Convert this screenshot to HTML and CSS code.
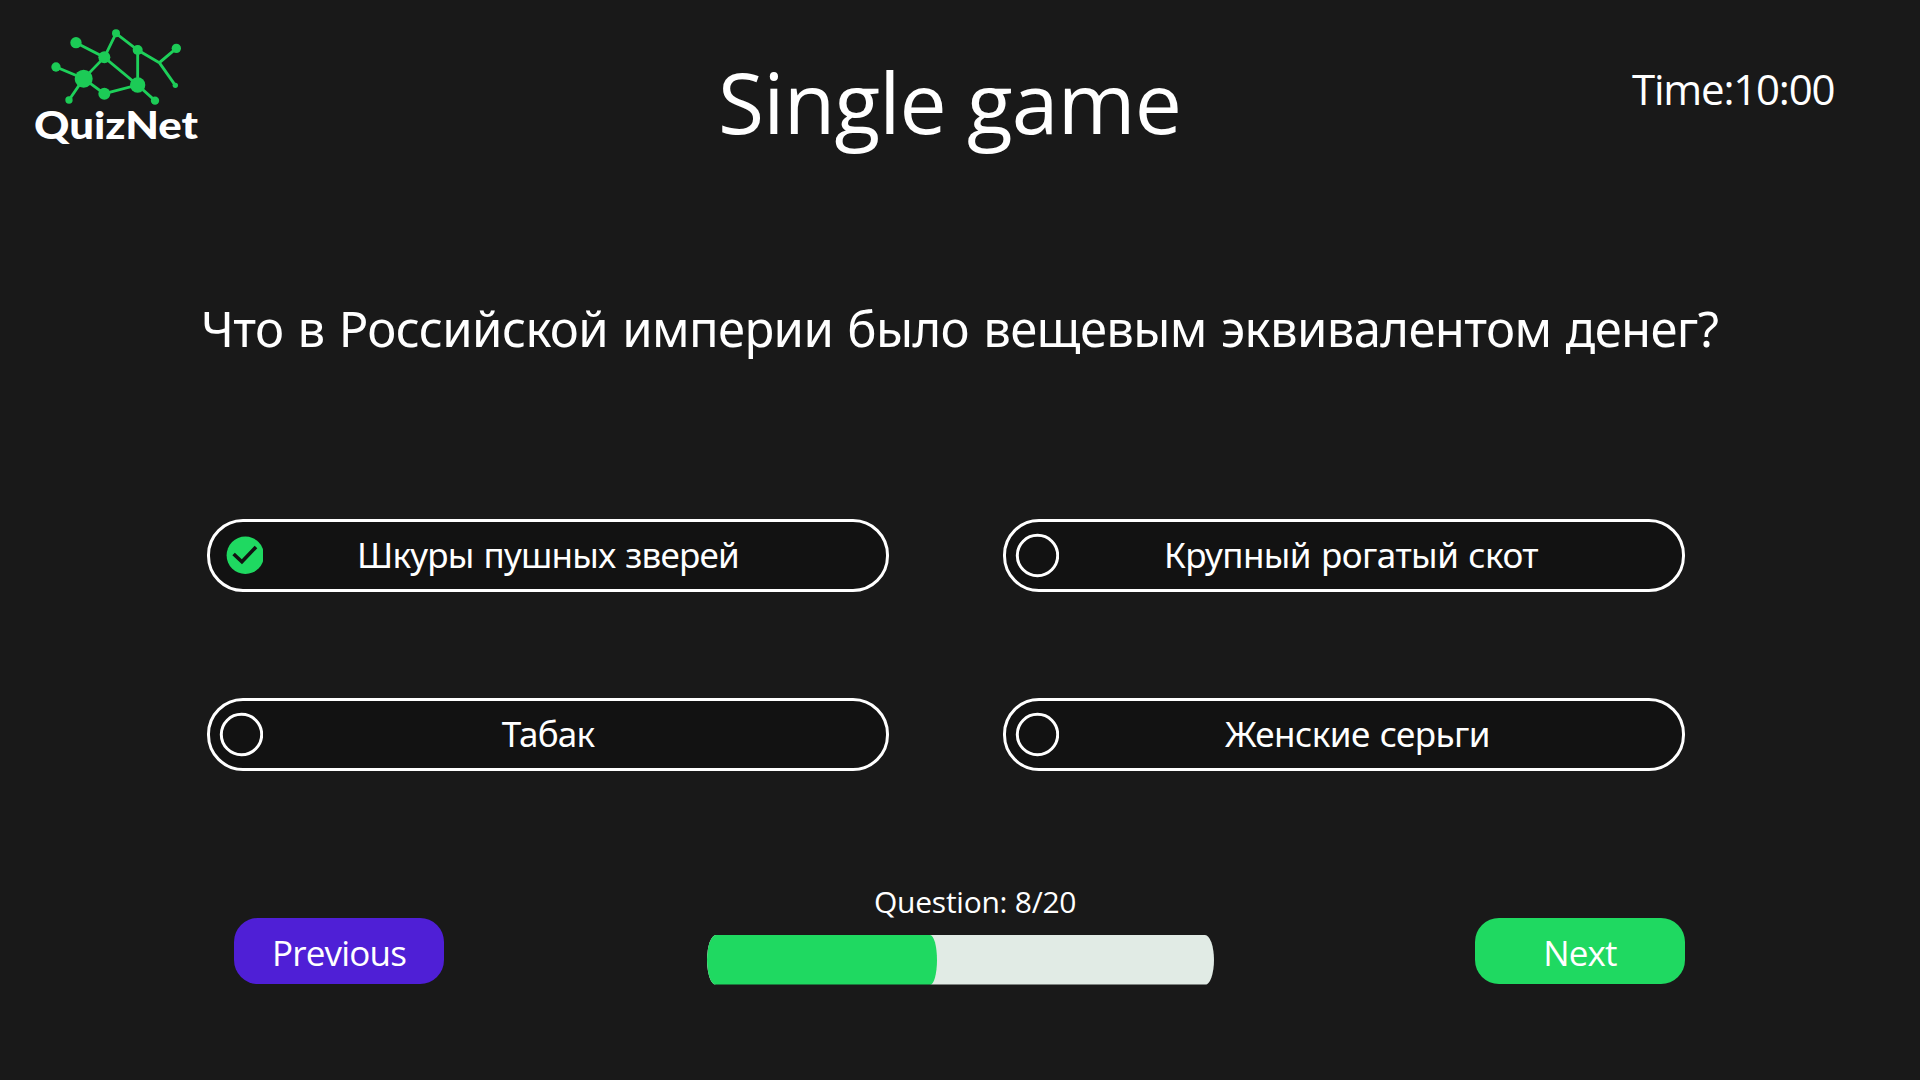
FILE: index.html
```html
<!DOCTYPE html>
<html lang="ru">
<head>
<meta charset="utf-8">
<title>QuizNet — Single game</title>
<link rel="stylesheet" href="styles.css">
</head>
<body>
<div class="page">
  <header class="header">
    <svg class="logo" viewBox="0 0 600 450" role="img" aria-label="QuizNet">
      <g class="logo-links">
        <path d="M168 98 253 142 288 70 353 120 418 158 469 115M418 158 466 226M353 120V225L253 142 191 206 108 171M191 206 147 270M191 206 253 251 353 225 405 272"/>
      </g>
      <g class="logo-nodes">
        <circle cx="168" cy="98" r="17"/>
        <circle cx="288" cy="70" r="12"/>
        <circle cx="253" cy="142" r="18"/>
        <circle cx="353" cy="120" r="15"/>
        <circle cx="469" cy="115" r="14"/>
        <circle cx="466" cy="226" r="8"/>
        <circle cx="108" cy="171" r="14"/>
        <circle cx="191" cy="206" r="27"/>
        <circle cx="147" cy="270" r="11"/>
        <circle cx="253" cy="251" r="18"/>
        <circle cx="353" cy="225" r="23"/>
        <circle cx="405" cy="272" r="12.5"/>
      </g>
      <text class="logo-name" x="42" y="388" textLength="492" lengthAdjust="spacingAndGlyphs">QuizNet</text>
    </svg>
    <h1 class="title">Single game</h1>
    <div class="timer">Time:10:00</div>
  </header>

  <main>
    <h2 class="question">Что в Российской империи было вещевым эквивалентом денег?</h2>
    <div class="options">
      <div class="option">
        <svg class="mark" viewBox="0 0 53 67"><circle class="mark-fill" cx="35.3" cy="33.3" r="18.7"/><path class="mark-tick" d="M23.6 32 31.9 39.8 46 25"/></svg>
        <span class="option-text">Шкуры пушных зверей</span>
      </div>
      <div class="option">
        <svg class="mark" viewBox="0 0 53 67"><circle class="mark-ring" cx="31.5" cy="33.5" r="20.2"/></svg>
        <span class="option-text option-text-cattle">Крупный рогатый скот</span>
      </div>
      <div class="option">
        <svg class="mark" viewBox="0 0 53 67"><circle class="mark-ring" cx="31.5" cy="33.5" r="20.2"/></svg>
        <span class="option-text">Табак</span>
      </div>
      <div class="option">
        <svg class="mark" viewBox="0 0 53 67"><circle class="mark-ring" cx="31.5" cy="33.5" r="20.2"/></svg>
        <span class="option-text option-text-earrings">Женские серьги</span>
      </div>
    </div>
  </main>

  <footer class="footer">
    <button class="button button-previous">Previous</button>
    <div class="progress">
      <div class="progress-label">Question: 8/20</div>
      <div class="progress-track"><div class="progress-value"></div></div>
    </div>
    <button class="button button-next">Next</button>
  </footer>
</div>
</body>
</html>
```
FILE: styles.css
```css
* { box-sizing: border-box; }

body {
  margin: 0;
  background: #191919;
  color: #fff;
  font-family: "Open Sans", "Noto Sans", sans-serif;
}

.page {
  width: 1920px;
  height: 1080px;
  overflow: hidden;
  display: flex;
  flex-direction: column;
}

.header {
  display: grid;
  grid-template-columns: 718px 914px 1fr;
  align-items: start;
  height: 295px;
}

.logo {
  width: 200px;
  height: 150px;
  margin: 10px 0 0 20px;
}

.logo-links {
  fill: none;
  stroke: #1ed05a;
  stroke-width: 8.5;
}

.logo-nodes { fill: #1ccb56; }

.logo-name {
  fill: #fff;
  font: 900 115px Lato, sans-serif;
}

.title {
  margin: 46px 0 0;
  font-size: 84px;
  font-weight: 400;
  line-height: 112px;
  letter-spacing: -0.8px;
  white-space: nowrap;
}

.timer {
  margin-top: 61px;
  font-size: 42px;
  line-height: 56px;
  letter-spacing: -1.2px;
  white-space: nowrap;
}

.question {
  margin: 0;
  padding-left: 201px;
  font-family: "Noto Sans", sans-serif;
  font-size: 49px;
  font-weight: 400;
  line-height: 66px;
  letter-spacing: -0.63px;
  word-spacing: 2px;
  white-space: nowrap;
}

.options {
  display: grid;
  grid-template-columns: 682px 682px;
  grid-auto-rows: 73px;
  gap: 106px 114px;
  margin: 158px 0 0 207px;
}

.option {
  display: flex;
  align-items: flex-start;
  padding-right: 53px;
  border: 3px solid #fff;
  border-radius: 36px;
  background: #121212;
}

.mark {
  flex: none;
  width: 53px;
  height: 67px;
}

.mark-ring {
  fill: none;
  stroke: #fff;
  stroke-width: 3;
}

.mark-fill { fill: #1fd961; }

.mark-tick {
  fill: none;
  stroke: #121212;
  stroke-width: 3.6;
}

.option-text {
  flex: 1;
  font-family: "Noto Sans", sans-serif;
  font-size: 35px;
  line-height: 65px;
  letter-spacing: -0.75px;
  word-spacing: 1.5px;
  text-align: center;
  white-space: nowrap;
}

.option-text-cattle {
  padding-left: 14px;
  letter-spacing: -0.55px;
}

.option-text-earrings {
  padding-left: 27px;
  letter-spacing: -0.55px;
}

.footer {
  display: flex;
  align-items: flex-start;
  margin: 110px 235px 0 234px;
}

.button {
  width: 210px;
  height: 66px;
  margin-top: 37px;
  padding: 3px 0 0;
  border: 0;
  border-radius: 24px;
  color: #fff;
  font: 400 35px/48px "Open Sans", sans-serif;
  letter-spacing: -0.8px;
}

.button-previous { background: #4f1fd6; }
.button-next { background: #1fd961; }

.progress {
  width: 507px;
  margin: 0 261px 0 263px;
}

.progress-label {
  padding: 1px 0 0 167px;
  font-size: 30px;
  line-height: 40px;
  letter-spacing: -0.25px;
}

.progress-track {
  position: relative;
  height: 50px;
  margin-top: 13px;
  border-radius: 9px / 25px;
  background: #e1ebe5;
  overflow: hidden;
}

.progress-value {
  width: 230px;
  height: 100%;
  border-radius: 7px / 25px;
  background: #1fd961;
}

.progress-track::after {
  content: "";
  position: absolute;
  inset: auto 0 0;
  height: 1px;
  background: rgba(25, 25, 25, 0.5);
}
```
